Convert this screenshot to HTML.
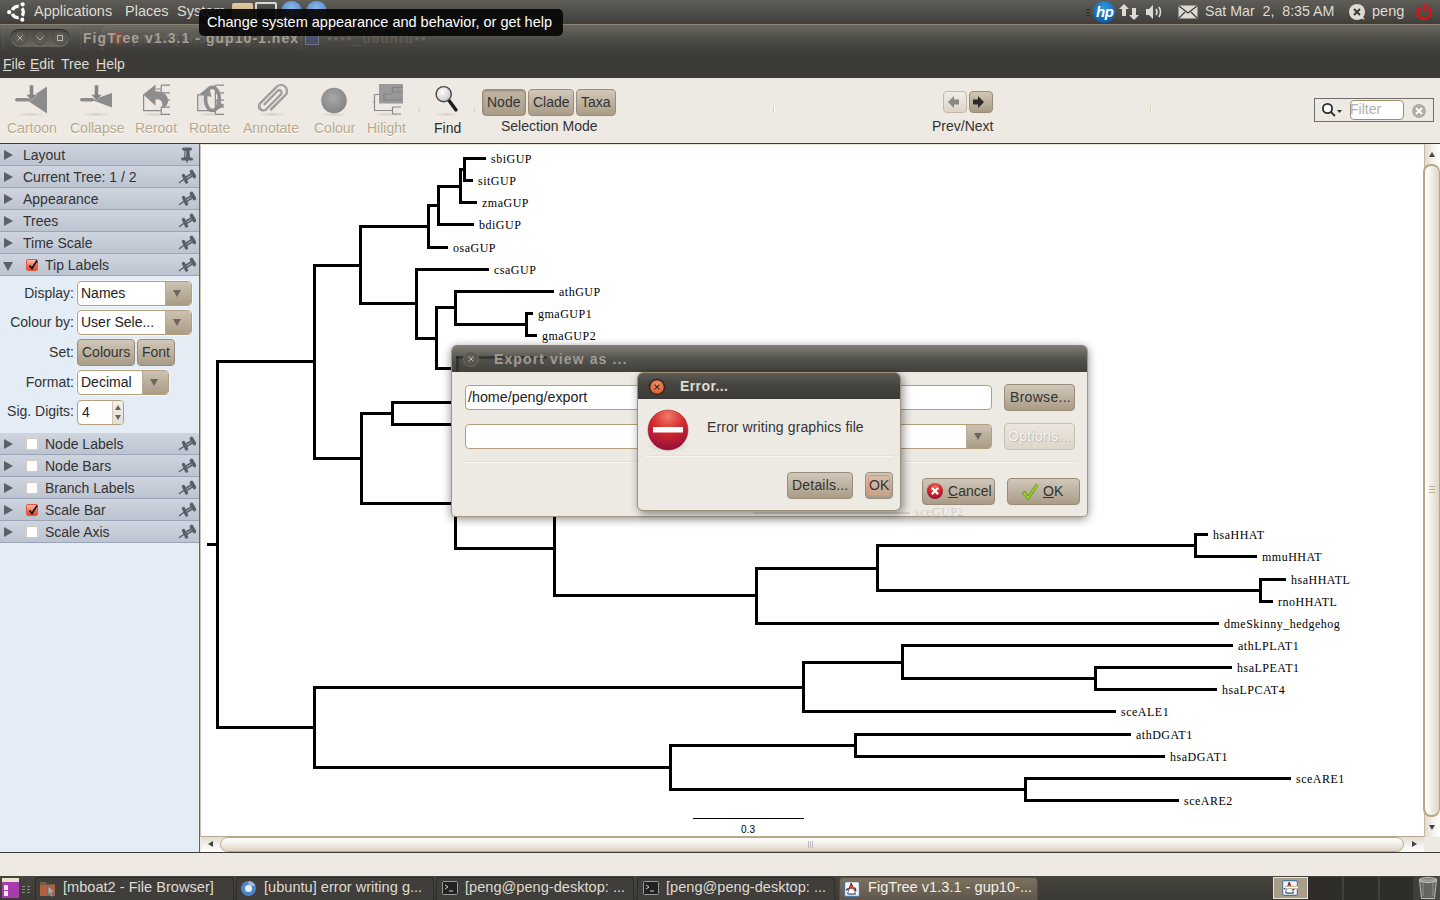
<!DOCTYPE html>
<html><head><meta charset="utf-8">
<style>
*{box-sizing:border-box;}
html,body{margin:0;padding:0;}
body{width:1440px;height:900px;overflow:hidden;position:relative;background:#edeae4;font-family:"Liberation Sans",sans-serif;font-size:14px;color:#3c3c3c;}
.a{position:absolute;}
.t{position:absolute;white-space:nowrap;line-height:1;}
/* top panel */
#top{left:0;top:0;width:1440px;height:24px;background:linear-gradient(#5f5d57,#3f3e3a);}
#topline{left:0;top:24px;width:1440px;height:1px;background:#8c8374;}
#title{left:0;top:25px;width:1440px;height:28px;background:linear-gradient(#6b6861 0%,#4a4844 60%,#3c3b37 100%);}
#menu{left:0;top:53px;width:1440px;height:25px;background:#3c3b37;}
#toolbar{left:0;top:78px;width:1440px;height:65px;background:#eeeae3;}
#tbline{left:0;top:143px;width:1440px;height:1px;background:#3c3b37;}
#left{left:0;top:144px;width:199px;height:708px;background:#e4ecf6;}
#leftline{left:199px;top:144px;width:1px;height:709px;background:#64666b;}
#canvas{left:200px;top:144px;width:1224px;height:693px;background:#fff;border-left:1px solid #cfc3ae;border-top:1px solid #efe6d8;border-bottom:1px solid #b9a98f;}
#botline{left:0;top:852px;width:1440px;height:1px;background:#3c3b37;}
#status{left:0;top:853px;width:1440px;height:23px;background:#eeeae3;}
#bottom{left:0;top:876px;width:1440px;height:24px;background:#3c3b37;}
.tree{position:absolute;left:0;top:0;}
.hdr{position:absolute;left:0;width:199px;height:22px;background:linear-gradient(#cfd5df,#bcc4d1);border-bottom:1px solid #9ba5b5;}
.hdr .tri{position:absolute;left:4px;top:6px;width:0;height:0;border-left:9px solid #5d6068;border-top:5px solid transparent;border-bottom:5px solid transparent;}
.hdr .tri.dn{left:3px;top:8px;border-left:5px solid transparent;border-right:5px solid transparent;border-top:9px solid #5d6068;border-bottom:0;}
.hdr .lbl{position:absolute;top:4px;font-size:14px;color:#333;white-space:nowrap;line-height:14px;}
.hdr .cb{position:absolute;left:26px;top:5px;width:12px;height:12px;border-radius:2px;background:#fff;border:1px solid #d6cdbd;}
.hdr .cb.on{background:linear-gradient(#fbc3b3,#f1735b 55%,#e9482b);border-color:#e0573c;}
.pin{position:absolute;left:176px;top:2px;}
.btn{position:absolute;border:1px solid #9a8d78;border-radius:4px;background:linear-gradient(#d2c8b9,#a99c87);}
.tbt{position:absolute;font-size:14px;color:#b7a78d;text-shadow:0 1px 0 #fff;white-space:nowrap;line-height:14px;}
</style></head>
<body>
<!-- top panel -->
<div id="top" class="a"></div>
<div id="topline" class="a"></div>
<div id="title" class="a"></div>
<div id="menu" class="a"></div>
<div id="toolbar" class="a"></div>
<div id="tbline" class="a"></div>
<div id="left" class="a"></div>
<div id="leftline" class="a"></div>
<div id="canvas" class="a"></div>
<div id="botline" class="a"></div>
<div id="status" class="a"></div>
<div id="bottom" class="a"></div>

<svg class="tree" width="1440" height="900" viewBox="0 0 1440 900">
<g stroke="#000" stroke-width="3" shape-rendering="crispEdges" stroke-linecap="butt"><line x1="217.5" y1="360.0" x2="217.5" y2="729.0"/><line x1="216.0" y1="361.5" x2="316.0" y2="361.5"/><line x1="314.5" y1="264.0" x2="314.5" y2="460.0"/><line x1="313.0" y1="265.5" x2="362.0" y2="265.5"/><line x1="360.5" y1="225.0" x2="360.5" y2="305.0"/><line x1="359.0" y1="226.5" x2="430.0" y2="226.5"/><line x1="428.5" y1="204.0" x2="428.5" y2="249.0"/><line x1="427.0" y1="205.5" x2="440.0" y2="205.5"/><line x1="438.5" y1="185.0" x2="438.5" y2="226.0"/><line x1="437.0" y1="186.5" x2="462.0" y2="186.5"/><line x1="460.5" y1="168.0" x2="460.5" y2="204.0"/><line x1="459.0" y1="169.5" x2="466.0" y2="169.5"/><line x1="464.5" y1="157.0" x2="464.5" y2="182.0"/><line x1="463.0" y1="158.5" x2="486" y2="158.5"/><line x1="463.0" y1="180.5" x2="473" y2="180.5"/><line x1="459.0" y1="202.5" x2="477" y2="202.5"/><line x1="437.0" y1="224.5" x2="474" y2="224.5"/><line x1="427.0" y1="247.5" x2="448" y2="247.5"/><line x1="359.0" y1="303.5" x2="418.0" y2="303.5"/><line x1="416.5" y1="268.0" x2="416.5" y2="340.0"/><line x1="415.0" y1="269.5" x2="489" y2="269.5"/><line x1="415.0" y1="338.5" x2="438.0" y2="338.5"/><line x1="436.5" y1="306.0" x2="436.5" y2="370.0"/><line x1="435.0" y1="307.5" x2="457.0" y2="307.5"/><line x1="455.5" y1="290.0" x2="455.5" y2="326.0"/><line x1="454.0" y1="291.5" x2="554" y2="291.5"/><line x1="454.0" y1="324.5" x2="528.0" y2="324.5"/><line x1="526.5" y1="312.0" x2="526.5" y2="337.0"/><line x1="525.0" y1="313.5" x2="533" y2="313.5"/><line x1="525.0" y1="335.5" x2="537" y2="335.5"/><line x1="435.0" y1="368.5" x2="459.0" y2="368.5"/><line x1="457.5" y1="356.0" x2="457.5" y2="382.0"/><line x1="456.0" y1="357.5" x2="520" y2="357.5"/><line x1="456.0" y1="380.5" x2="520" y2="380.5"/><line x1="313.0" y1="458.5" x2="363.0" y2="458.5"/><line x1="361.5" y1="412.0" x2="361.5" y2="505.0"/><line x1="360.0" y1="413.5" x2="394.0" y2="413.5"/><line x1="392.5" y1="401.0" x2="392.5" y2="426.0"/><line x1="391.0" y1="402.5" x2="600" y2="402.5"/><line x1="391.0" y1="424.5" x2="600" y2="424.5"/><line x1="360.0" y1="503.5" x2="457.0" y2="503.5"/><line x1="455.5" y1="456.0" x2="455.5" y2="550.0"/><line x1="454.0" y1="457.5" x2="472.0" y2="457.5"/><line x1="470.5" y1="445.0" x2="470.5" y2="470.0"/><line x1="469.0" y1="446.5" x2="600" y2="446.5"/><line x1="469.0" y1="468.5" x2="600" y2="468.5"/><line x1="454.0" y1="548.5" x2="556.0" y2="548.5"/><line x1="554.5" y1="500.0" x2="554.5" y2="597.0"/><line x1="553.0" y1="501.5" x2="602.0" y2="501.5"/><line x1="600.5" y1="489.0" x2="600.5" y2="514.0"/><line x1="599.0" y1="490.5" x2="880" y2="490.5"/><line x1="599.0" y1="512.5" x2="908" y2="512.5"/><line x1="553.0" y1="595.5" x2="758.0" y2="595.5"/><line x1="756.5" y1="567.0" x2="756.5" y2="625.0"/><line x1="755.0" y1="568.5" x2="879.0" y2="568.5"/><line x1="877.5" y1="544.0" x2="877.5" y2="592.0"/><line x1="876.0" y1="545.5" x2="1197.0" y2="545.5"/><line x1="1195.5" y1="533.0" x2="1195.5" y2="558.0"/><line x1="1194.0" y1="534.5" x2="1208" y2="534.5"/><line x1="1194.0" y1="556.5" x2="1257" y2="556.5"/><line x1="876.0" y1="590.5" x2="1262.0" y2="590.5"/><line x1="1260.5" y1="578.0" x2="1260.5" y2="603.0"/><line x1="1259.0" y1="579.5" x2="1286" y2="579.5"/><line x1="1259.0" y1="601.5" x2="1273" y2="601.5"/><line x1="755.0" y1="623.5" x2="1219" y2="623.5"/><line x1="216.0" y1="727.5" x2="316.0" y2="727.5"/><line x1="314.5" y1="686.0" x2="314.5" y2="769.0"/><line x1="313.0" y1="687.5" x2="805.0" y2="687.5"/><line x1="803.5" y1="661.0" x2="803.5" y2="713.0"/><line x1="802.0" y1="662.5" x2="904.0" y2="662.5"/><line x1="902.5" y1="644.0" x2="902.5" y2="680.0"/><line x1="901.0" y1="645.5" x2="1233" y2="645.5"/><line x1="901.0" y1="678.5" x2="1097.0" y2="678.5"/><line x1="1095.5" y1="666.0" x2="1095.5" y2="691.0"/><line x1="1094.0" y1="667.5" x2="1232" y2="667.5"/><line x1="1094.0" y1="689.5" x2="1217" y2="689.5"/><line x1="802.0" y1="711.5" x2="1116" y2="711.5"/><line x1="313.0" y1="767.5" x2="672.0" y2="767.5"/><line x1="670.5" y1="744.0" x2="670.5" y2="791.0"/><line x1="669.0" y1="745.5" x2="857.0" y2="745.5"/><line x1="855.5" y1="733.0" x2="855.5" y2="758.0"/><line x1="854.0" y1="734.5" x2="1131" y2="734.5"/><line x1="854.0" y1="756.5" x2="1165" y2="756.5"/><line x1="669.0" y1="789.5" x2="1027.0" y2="789.5"/><line x1="1025.5" y1="777.0" x2="1025.5" y2="802.0"/><line x1="1024.0" y1="778.5" x2="1291" y2="778.5"/><line x1="1024.0" y1="800.5" x2="1179" y2="800.5"/><line x1="207" y1="544.5" x2="217.5" y2="544.5"/></g>
<g font-family="Liberation Serif" font-size="12" fill="#000" letter-spacing="0.5"><text x="491.0" y="162.8">sbiGUP</text><text x="478.0" y="184.8">sitGUP</text><text x="482.0" y="206.8">zmaGUP</text><text x="479.0" y="228.8">bdiGUP</text><text x="453.0" y="251.8">osaGUP</text><text x="494.0" y="273.8">csaGUP</text><text x="559.0" y="295.8">athGUP</text><text x="538.0" y="317.8">gmaGUP1</text><text x="542.0" y="339.8">gmaGUP2</text><text x="1213.0" y="538.8">hsaHHAT</text><text x="1262.0" y="560.8">mmuHHAT</text><text x="1291.0" y="583.8">hsaHHATL</text><text x="1278.0" y="605.8">rnoHHATL</text><text x="1224.0" y="627.8">dmeSkinny_hedgehog</text><text x="1238.0" y="649.8">athLPLAT1</text><text x="1237.0" y="671.8">hsaLPEAT1</text><text x="1222.0" y="693.8">hsaLPCAT4</text><text x="1121.0" y="715.8">sceALE1</text><text x="1136.0" y="738.8">athDGAT1</text><text x="1170.0" y="760.8">hsaDGAT1</text><text x="1296.0" y="782.8">sceARE1</text><text x="1184.0" y="804.8">sceARE2</text></g>
<line x1="693" y1="818.5" x2="804" y2="818.5" stroke="#000" stroke-width="1"/>
<text x="748" y="833" font-family="Liberation Sans" font-size="10" text-anchor="middle" fill="#000">0.3</text>
</svg>

<!-- TOP PANEL CONTENT -->
<svg class="a" style="left:5px;top:1px" width="24" height="22" viewBox="0 0 24 22"><path d="M7.44 9.08 A5.6 5.6 0 0 1 13.67 5.49 M16.99 7.40 A5.6 5.6 0 0 1 16.99 14.60 M13.67 16.51 A5.6 5.6 0 0 1 7.44 12.92" fill="none" stroke="#fff" stroke-width="3.4"/><g fill="#fff"><circle cx="4.2" cy="11.2" r="2.1"/><circle cx="17.6" cy="3.3" r="2.1"/><circle cx="17.3" cy="18.7" r="2.1"/></g></svg>
<div class="t" style="left:34px;top:4px;font-size:14.5px;color:#dfdbd2;">Applications</div>
<div class="t" style="left:125px;top:4px;font-size:14.5px;color:#dfdbd2;">Places</div>
<div class="t" style="left:177px;top:4px;font-size:14.5px;color:#dfdbd2;">System</div>
<div class="a" style="left:232px;top:3px;width:21px;height:18px;background:linear-gradient(#e2cba3,#b89a6a);border-radius:2px;"></div>
<div class="a" style="left:255px;top:2px;width:22px;height:19px;background:linear-gradient(#555,#222);border:2px solid #d8d8d8;border-radius:2px;"></div>
<div class="a" style="left:281px;top:1px;width:21px;height:21px;border-radius:50%;background:radial-gradient(circle at 50% 35%,#8fb8ea,#3f74c2);"></div>
<div class="a" style="left:306px;top:1px;width:21px;height:21px;border-radius:50%;background:radial-gradient(circle at 50% 35%,#8fb8ea,#3f74c2);"></div>
<!-- right side -->
<div class="a" style="left:1086px;top:9px;width:4px;height:7px;border-top:1px solid #2a2a28;border-bottom:1px solid #2a2a28;"></div><div class="a" style="left:1086px;top:12px;width:4px;height:1px;background:#2a2a28;"></div>
<div class="a" style="left:1093px;top:1px;width:22px;height:22px;border-radius:50%;background:radial-gradient(circle at 50% 30%,#2f95dc,#0a4f98);"></div>
<div class="t" style="left:1096px;top:4px;font-size:15px;font-style:italic;font-weight:bold;color:#fff;letter-spacing:-0.5px;">hp</div>
<svg class="a" style="left:1119px;top:3px" width="20" height="18" viewBox="0 0 20 18"><g fill="#dfdbd2"><path d="M5 1 L10 6 H7 V13 H3 V6 H0 Z"/><path d="M15 17 L20 12 H17 V5 H13 V12 H10 Z"/></g></svg>
<svg class="a" style="left:1145px;top:4px" width="18" height="16" viewBox="0 0 18 16"><g fill="#dfdbd2"><path d="M1 5 H4 L8 1 V15 L4 11 H1 Z"/></g><g fill="none" stroke="#dfdbd2" stroke-width="1.6"><path d="M11 5 Q13 8 11 11"/><path d="M14 3 Q17 8 14 13"/></g></svg>
<svg class="a" style="left:1178px;top:5px" width="20" height="14" viewBox="0 0 20 14"><rect x="0.5" y="0.5" width="19" height="13" rx="1" fill="#dfdbd2"/><path d="M1 1 L10 8 L19 1 M1 13 L7 7 M19 13 L13 7" stroke="#3c3b37" stroke-width="1.2" fill="none"/></svg>
<div class="t" style="left:1205px;top:4px;font-size:14.2px;color:#dfdbd2;letter-spacing:0px;">Sat Mar &nbsp;2, &nbsp;8:35 AM</div>
<svg class="a" style="left:1348px;top:3px" width="20" height="19" viewBox="0 0 20 19"><circle cx="9" cy="9" r="8" fill="#dfdbd2"/><path d="M12 15 L17 17 L14 12 Z" fill="#dfdbd2"/><path d="M6 6 L12 12 M12 6 L6 12" stroke="#3c3b37" stroke-width="2"/></svg>
<div class="t" style="left:1372px;top:4px;font-size:14.5px;color:#dfdbd2;">peng</div>
<svg class="a" style="left:1415px;top:3px" width="18" height="18" viewBox="0 0 18 18"><path d="M5.2 4.2 A6.5 6.5 0 1 0 12.8 4.2" fill="none" stroke="#d11" stroke-width="2.4"/><path d="M9 1 V9" stroke="#d11" stroke-width="2.4"/></svg>

<!-- TITLE BAR -->
<!-- ghost overlay -->
<div class="a" style="left:3px;top:27px;width:78px;height:23px;border:1px solid rgba(255,255,255,.06);border-bottom:0;border-radius:3px 3px 0 0;"></div>
<div class="a" style="left:102px;top:26px;width:200px;height:25px;border:1px solid rgba(255,255,255,.07);border-bottom:0;border-radius:5px 5px 0 0;background:linear-gradient(rgba(255,255,255,.04),rgba(255,255,255,0));"></div>
<div class="a" style="left:111px;top:31px;width:14px;height:14px;border-radius:50%;background:rgba(200,70,40,.28);"></div>
<div class="t" style="left:132px;top:32px;font-size:13px;color:rgba(160,155,145,.25);">[ubuntu] error writing</div>
<div class="a" style="left:305px;top:31px;width:14px;height:14px;background:rgba(70,90,150,.45);border:1px solid rgba(200,200,220,.3);"></div>
<div class="t" style="left:327px;top:32px;font-size:13px;color:rgba(150,145,135,.35);letter-spacing:2px;">▪▪▪▪_ubuntu▪▪</div>

<div class="a" style="left:10px;top:29px;width:60px;height:18px;border-radius:9px;background:linear-gradient(#4a4843,#6a675f);box-shadow:inset 0 1px 1px rgba(0,0,0,.5);"></div>
<div class="a" style="left:13px;top:31px;width:14px;height:14px;border-radius:50%;background:#5d5a54;border:1px solid #4c4a45;"></div>
<div class="a" style="left:33px;top:31px;width:14px;height:14px;border-radius:50%;background:#5d5a54;border:1px solid #4c4a45;"></div>
<div class="a" style="left:53px;top:31px;width:14px;height:14px;border-radius:50%;background:#5d5a54;border:1px solid #4c4a45;"></div>
<svg class="a" style="left:13px;top:31px" width="56" height="14" viewBox="0 0 56 14"><g stroke="#b5b1a8" stroke-width="1" fill="none"><path d="M4.5 4.5 L9.5 9.5 M9.5 4.5 L4.5 9.5"/><path d="M23.5 5.5 L27 9 L30.5 5.5"/><rect x="44.5" y="4.5" width="5" height="5"/></g></svg>
<div class="t" style="left:83px;top:31px;font-size:14px;font-weight:bold;color:#a39f95;letter-spacing:1.05px;">FigTree v1.3.1 - gup10-1.nex</div>

<!-- MENU -->
<div class="t" style="left:3px;top:57px;font-size:14px;color:#dfdbd2;"><u>F</u>ile</div>
<div class="t" style="left:30px;top:57px;font-size:14px;color:#dfdbd2;"><u>E</u>dit</div>
<div class="t" style="left:61px;top:57px;font-size:14px;color:#dfdbd2;">Tree</div>
<div class="t" style="left:96px;top:57px;font-size:14px;color:#dfdbd2;"><u>H</u>elp</div>




<!-- SCROLLBARS -->
<div class="a" style="left:1424px;top:144px;width:16px;height:709px;background:#edeae4;"></div>
<div class="a" style="left:1424px;top:144px;width:16px;height:693px;background:linear-gradient(90deg,#e2dccf,#f6f4f0 60%,#fff);border-left:1px solid #c7b99f;"></div>
<div class="a" style="left:1423px;top:164px;width:17px;height:653px;border:2px solid #b9a683;border-right-width:1px;border-radius:8px;background:linear-gradient(90deg,#fff,#f4f1eb 40%,#ddd4c4);"></div>
<div class="a" style="left:1429px;top:486px;width:6px;height:7px;border-top:1px solid #bfae90;border-bottom:1px solid #bfae90;"></div><div class="a" style="left:1429px;top:489px;width:6px;height:1px;background:#bfae90;"></div>
<div class="a" style="left:1429px;top:152px;width:0;height:0;border-left:3.5px solid transparent;border-right:3.5px solid transparent;border-bottom:5px solid #444;"></div>
<div class="a" style="left:1429px;top:825px;width:0;height:0;border-left:3.5px solid transparent;border-right:3.5px solid transparent;border-top:5px solid #444;"></div>
<div class="a" style="left:201px;top:837px;width:1223px;height:15px;background:linear-gradient(#e2dccf,#f6f4f0 60%,#fff);"></div>
<div class="a" style="left:220px;top:837px;width:1184px;height:15px;border:1px solid #b9a683;border-radius:8px;background:linear-gradient(#fff,#f4f1eb 40%,#ddd4c4);"></div>
<div class="a" style="left:208px;top:841px;width:0;height:0;border-top:3.5px solid transparent;border-bottom:3.5px solid transparent;border-right:5px solid #444;"></div>
<div class="a" style="left:1412px;top:841px;width:0;height:0;border-top:3.5px solid transparent;border-bottom:3.5px solid transparent;border-left:5px solid #444;"></div>
<div class="a" style="left:808px;top:841px;width:5px;height:7px;border-left:1px solid #bbb;border-right:1px solid #bbb;"></div>
<div class="a" style="left:810px;top:841px;width:1px;height:7px;background:#bbb;"></div>

<div class="a" style="left:0;top:852px;width:1440px;height:1px;background:#3c3b37;"></div>
<!-- BOTTOM PANEL -->
<div class="a" style="left:0;top:876px;width:1440px;height:24px;background:linear-gradient(#45443f,#3a3935);"></div>
<svg class="a" style="left:1px;top:877px" width="32" height="22" viewBox="0 0 32 22"><rect x="1" y="1" width="17" height="20" fill="#a93ab0"/><rect x="1" y="1" width="17" height="4" fill="#e9e4c9"/><rect x="3" y="8" width="4" height="5" fill="#f0e6f0"/><rect x="3" y="14" width="4" height="5" fill="#f0e6f0"/><g fill="#8a8a85"><rect x="21" y="9" width="3" height="1"/><rect x="26" y="9" width="3" height="1"/><rect x="21" y="12" width="3" height="1"/><rect x="26" y="12" width="3" height="1"/><rect x="21" y="15" width="3" height="1"/><rect x="26" y="15" width="3" height="1"/></g></svg>
<div class="a" style="left:35px;top:877px;width:199px;height:23px;border:1px solid #2e2d2a;border-bottom:0;border-radius:3px 3px 0 0;background:#3f3e3a;"></div>
<div class="a" style="left:236px;top:877px;width:198px;height:23px;border:1px solid #2e2d2a;border-bottom:0;border-radius:3px 3px 0 0;background:#3f3e3a;"></div>
<div class="a" style="left:436px;top:877px;width:198px;height:23px;border:1px solid #2e2d2a;border-bottom:0;border-radius:3px 3px 0 0;background:#3f3e3a;"></div>
<div class="a" style="left:637px;top:877px;width:198px;height:23px;border:1px solid #2e2d2a;border-bottom:0;border-radius:3px 3px 0 0;background:#3f3e3a;"></div>
<div class="a" style="left:839px;top:877px;width:199px;height:23px;border:1px solid #4f4b44;border-bottom:0;border-radius:4px 4px 0 0;background:linear-gradient(#7e715f,#5e564b);"></div>
<svg class="a" style="left:39px;top:880px" width="18" height="17" viewBox="0 0 18 17"><path d="M1 2 H7 L8 4 H16 V16 H1 Z" fill="#7b5b45"/><rect x="1" y="5" width="15" height="11" fill="#b2603e"/><path d="M9 6 L16 12 L12.5 12.5 L14 16 L12 16.5 L10.5 13 L9 15 Z" fill="#a8a8a8" stroke="#555" stroke-width=".5"/></svg>
<div class="t" style="left:63px;top:880px;font-size:14.6px;color:#dfdbd2;">[mboat2 - File Browser]</div>
<svg class="a" style="left:240px;top:880px" width="17" height="17" viewBox="0 0 17 17"><circle cx="8.5" cy="8.5" r="7.5" fill="#4f86c8"/><circle cx="8.5" cy="8.5" r="3.5" fill="#e8eef7"/><path d="M8.5 1 A7.5 7.5 0 0 1 15.5 6 H8.5 Z" fill="#d9d9d9" opacity=".6"/></svg>
<div class="t" style="left:264px;top:880px;font-size:14.6px;color:#dfdbd2;">[ubuntu] error writing g...</div>
<svg class="a" style="left:442px;top:880px" width="16" height="16" viewBox="0 0 16 16"><rect x="0.5" y="1.5" width="15" height="13" rx="1" fill="#222" stroke="#999"/><path d="M3 5 L6 7 L3 9 M7 11 H11" stroke="#ccc" stroke-width="1" fill="none"/></svg>
<div class="t" style="left:465px;top:880px;font-size:14.6px;color:#dfdbd2;">[peng@peng-desktop: ...</div>
<svg class="a" style="left:643px;top:880px" width="16" height="16" viewBox="0 0 16 16"><rect x="0.5" y="1.5" width="15" height="13" rx="1" fill="#222" stroke="#999"/><path d="M3 5 L6 7 L3 9 M7 11 H11" stroke="#ccc" stroke-width="1" fill="none"/></svg>
<div class="t" style="left:666px;top:880px;font-size:14.6px;color:#dfdbd2;">[peng@peng-desktop: ...</div>
<svg class="a" style="left:844px;top:881px" width="16" height="16" viewBox="0 0 16 16"><rect x="0.6" y="0.6" width="14.8" height="14.8" rx="1.5" fill="#f4f4f4" stroke="#4f78a0" stroke-width="1.2"/><path d="M7.2 2 L11.5 12.5 Q7.5 14.5 3.5 12.5 Z" fill="#fff" stroke="#333" stroke-width=".7"/><path d="M7.2 2 L9.6 7.5 H5 Z" fill="#1d1d1d"/><circle cx="7.5" cy="6" r="1.9" fill="#e8302c"/><path d="M5 7.5 L2 9" stroke="#3a4a5a" stroke-width="1.6"/><path d="M10.5 6.5 L12 10" stroke="#222" stroke-width="1.4"/><path d="M3.5 13 H12" stroke="#3f6a90" stroke-width="1"/></svg>
<div class="t" style="left:868px;top:880px;font-size:14.6px;color:#f2efe8;">FigTree v1.3.1 - gup10-...</div>
<div class="a" style="left:1273px;top:877px;width:35px;height:22px;border:1px solid #e8e4dc;background:#a99c88;"></div>
<svg class="a" style="left:1282px;top:880px" width="16" height="16" viewBox="0 0 16 16"><rect x="0.6" y="0.6" width="14.8" height="14.8" rx="1.5" fill="#f4f4f4" stroke="#4f78a0" stroke-width="1.2"/><path d="M7.2 2 L11.5 12.5 Q7.5 14.5 3.5 12.5 Z" fill="#fff" stroke="#333" stroke-width=".7"/><path d="M7.2 2 L9.6 7.5 H5 Z" fill="#1d1d1d"/><circle cx="7.5" cy="6" r="1.9" fill="#e8302c"/><path d="M5 7.5 L2 9" stroke="#3a4a5a" stroke-width="1.6"/><path d="M10.5 6.5 L12 10" stroke="#222" stroke-width="1.4"/><path d="M3.5 13 H12" stroke="#3f6a90" stroke-width="1"/></svg><div class="a" style="left:1285px;top:886px;width:13px;height:3px;background:#fff;border-top:1px solid #c8b9a0;border-bottom:1px solid #c8b9a0;"></div>
<div class="a" style="left:1308px;top:877px;width:35px;height:23px;background:#2e2d2a;border-right:1px solid #46443f;"></div>
<div class="a" style="left:1344px;top:877px;width:35px;height:23px;background:#2e2d2a;border-right:1px solid #46443f;"></div>
<div class="a" style="left:1380px;top:877px;width:35px;height:23px;background:#2e2d2a;"></div>
<div class="a" style="left:1413px;top:877px;width:27px;height:23px;background:linear-gradient(90deg,#3e3d39,#4d4b46);"></div><svg class="a" style="left:1417px;top:876px" width="22" height="24" viewBox="0 0 22 24"><path d="M2.5 4 H19.5 L17.5 22.5 H4.5 Z" fill="rgba(160,160,160,.35)" stroke="#b9b9b9" stroke-width="1"/><ellipse cx="11" cy="4" rx="8.8" ry="2.4" fill="rgba(200,200,200,.3)" stroke="#d0d0d0" stroke-width="1"/><path d="M6 6 V20 M16 6 V20" stroke="rgba(230,230,230,.35)" stroke-width="1"/></svg>

<!-- LEFT PANEL -->
<div class="hdr" style="top:144px"><div class="tri"></div><div class="lbl" style="left:23px">Layout</div><svg class="pin" style="left:181px;top:3px" width="14" height="16" viewBox="0 0 14 16"><path d="M2.5 2 H9.5" stroke="#5a5e66" stroke-width="3" stroke-linecap="round"/><path d="M3.5 2.5 H8.5 L9 11 H3 Z" fill="#5a5e66"/><path d="M1.5 12 H10.5" stroke="#5a5e66" stroke-width="3" stroke-linecap="round"/><path d="M6 13 V15.5" stroke="#5a5e66" stroke-width="1.5"/><path d="M5 4 L4.6 10" stroke="#b9c0cb" stroke-width="0.9"/></svg></div>
<div class="hdr" style="top:166px"><div class="tri"></div><div class="lbl" style="left:23px">Current Tree: 1 / 2</div><svg class="pin" width="20" height="16" viewBox="0 0 20 16"><path d="M3.5 14.5 L8.5 11" stroke="#5a5e66" stroke-width="1.5" stroke-linecap="round"/><path d="M7.5 7.5 L10.5 14" stroke="#5a5e66" stroke-width="3.2" stroke-linecap="round"/><path d="M9 11 L16.5 6.5" stroke="#5a5e66" stroke-width="3.8"/><path d="M15.5 3.5 L18.5 8.5" stroke="#5a5e66" stroke-width="3.6" stroke-linecap="round"/><path d="M10.5 10.2 L15.5 7.2" stroke="#b9c0cb" stroke-width="0.9"/></svg></div>
<div class="hdr" style="top:188px"><div class="tri"></div><div class="lbl" style="left:23px">Appearance</div><svg class="pin" width="20" height="16" viewBox="0 0 20 16"><path d="M3.5 14.5 L8.5 11" stroke="#5a5e66" stroke-width="1.5" stroke-linecap="round"/><path d="M7.5 7.5 L10.5 14" stroke="#5a5e66" stroke-width="3.2" stroke-linecap="round"/><path d="M9 11 L16.5 6.5" stroke="#5a5e66" stroke-width="3.8"/><path d="M15.5 3.5 L18.5 8.5" stroke="#5a5e66" stroke-width="3.6" stroke-linecap="round"/><path d="M10.5 10.2 L15.5 7.2" stroke="#b9c0cb" stroke-width="0.9"/></svg></div>
<div class="hdr" style="top:210px"><div class="tri"></div><div class="lbl" style="left:23px">Trees</div><svg class="pin" width="20" height="16" viewBox="0 0 20 16"><path d="M3.5 14.5 L8.5 11" stroke="#5a5e66" stroke-width="1.5" stroke-linecap="round"/><path d="M7.5 7.5 L10.5 14" stroke="#5a5e66" stroke-width="3.2" stroke-linecap="round"/><path d="M9 11 L16.5 6.5" stroke="#5a5e66" stroke-width="3.8"/><path d="M15.5 3.5 L18.5 8.5" stroke="#5a5e66" stroke-width="3.6" stroke-linecap="round"/><path d="M10.5 10.2 L15.5 7.2" stroke="#b9c0cb" stroke-width="0.9"/></svg></div>
<div class="hdr" style="top:232px"><div class="tri"></div><div class="lbl" style="left:23px">Time Scale</div><svg class="pin" width="20" height="16" viewBox="0 0 20 16"><path d="M3.5 14.5 L8.5 11" stroke="#5a5e66" stroke-width="1.5" stroke-linecap="round"/><path d="M7.5 7.5 L10.5 14" stroke="#5a5e66" stroke-width="3.2" stroke-linecap="round"/><path d="M9 11 L16.5 6.5" stroke="#5a5e66" stroke-width="3.8"/><path d="M15.5 3.5 L18.5 8.5" stroke="#5a5e66" stroke-width="3.6" stroke-linecap="round"/><path d="M10.5 10.2 L15.5 7.2" stroke="#b9c0cb" stroke-width="0.9"/></svg></div>
<div class="hdr" style="top:254px"><div class="tri dn"></div><div class="cb on"></div><svg style="position:absolute;left:27px;top:5px" width="12" height="12" viewBox="0 0 12 12"><path d="M2.5 6.5 L5 9.5 L10 1.5" stroke="#111" stroke-width="1.7" fill="none"/></svg><div class="lbl" style="left:45px">Tip Labels</div><svg class="pin" width="20" height="16" viewBox="0 0 20 16"><path d="M3.5 14.5 L8.5 11" stroke="#5a5e66" stroke-width="1.5" stroke-linecap="round"/><path d="M7.5 7.5 L10.5 14" stroke="#5a5e66" stroke-width="3.2" stroke-linecap="round"/><path d="M9 11 L16.5 6.5" stroke="#5a5e66" stroke-width="3.8"/><path d="M15.5 3.5 L18.5 8.5" stroke="#5a5e66" stroke-width="3.6" stroke-linecap="round"/><path d="M10.5 10.2 L15.5 7.2" stroke="#b9c0cb" stroke-width="0.9"/></svg></div>
<div class="hdr" style="top:433px"><div class="tri"></div><div class="cb"></div><div class="lbl" style="left:45px">Node Labels</div><svg class="pin" width="20" height="16" viewBox="0 0 20 16"><path d="M3.5 14.5 L8.5 11" stroke="#5a5e66" stroke-width="1.5" stroke-linecap="round"/><path d="M7.5 7.5 L10.5 14" stroke="#5a5e66" stroke-width="3.2" stroke-linecap="round"/><path d="M9 11 L16.5 6.5" stroke="#5a5e66" stroke-width="3.8"/><path d="M15.5 3.5 L18.5 8.5" stroke="#5a5e66" stroke-width="3.6" stroke-linecap="round"/><path d="M10.5 10.2 L15.5 7.2" stroke="#b9c0cb" stroke-width="0.9"/></svg></div>
<div class="hdr" style="top:455px"><div class="tri"></div><div class="cb"></div><div class="lbl" style="left:45px">Node Bars</div><svg class="pin" width="20" height="16" viewBox="0 0 20 16"><path d="M3.5 14.5 L8.5 11" stroke="#5a5e66" stroke-width="1.5" stroke-linecap="round"/><path d="M7.5 7.5 L10.5 14" stroke="#5a5e66" stroke-width="3.2" stroke-linecap="round"/><path d="M9 11 L16.5 6.5" stroke="#5a5e66" stroke-width="3.8"/><path d="M15.5 3.5 L18.5 8.5" stroke="#5a5e66" stroke-width="3.6" stroke-linecap="round"/><path d="M10.5 10.2 L15.5 7.2" stroke="#b9c0cb" stroke-width="0.9"/></svg></div>
<div class="hdr" style="top:477px"><div class="tri"></div><div class="cb"></div><div class="lbl" style="left:45px">Branch Labels</div><svg class="pin" width="20" height="16" viewBox="0 0 20 16"><path d="M3.5 14.5 L8.5 11" stroke="#5a5e66" stroke-width="1.5" stroke-linecap="round"/><path d="M7.5 7.5 L10.5 14" stroke="#5a5e66" stroke-width="3.2" stroke-linecap="round"/><path d="M9 11 L16.5 6.5" stroke="#5a5e66" stroke-width="3.8"/><path d="M15.5 3.5 L18.5 8.5" stroke="#5a5e66" stroke-width="3.6" stroke-linecap="round"/><path d="M10.5 10.2 L15.5 7.2" stroke="#b9c0cb" stroke-width="0.9"/></svg></div>
<div class="hdr" style="top:499px"><div class="tri"></div><div class="cb on"></div><svg style="position:absolute;left:27px;top:5px" width="12" height="12" viewBox="0 0 12 12"><path d="M2.5 6.5 L5 9.5 L10 1.5" stroke="#111" stroke-width="1.7" fill="none"/></svg><div class="lbl" style="left:45px">Scale Bar</div><svg class="pin" width="20" height="16" viewBox="0 0 20 16"><path d="M3.5 14.5 L8.5 11" stroke="#5a5e66" stroke-width="1.5" stroke-linecap="round"/><path d="M7.5 7.5 L10.5 14" stroke="#5a5e66" stroke-width="3.2" stroke-linecap="round"/><path d="M9 11 L16.5 6.5" stroke="#5a5e66" stroke-width="3.8"/><path d="M15.5 3.5 L18.5 8.5" stroke="#5a5e66" stroke-width="3.6" stroke-linecap="round"/><path d="M10.5 10.2 L15.5 7.2" stroke="#b9c0cb" stroke-width="0.9"/></svg></div>
<div class="hdr" style="top:521px"><div class="tri"></div><div class="cb"></div><div class="lbl" style="left:45px">Scale Axis</div><svg class="pin" width="20" height="16" viewBox="0 0 20 16"><path d="M3.5 14.5 L8.5 11" stroke="#5a5e66" stroke-width="1.5" stroke-linecap="round"/><path d="M7.5 7.5 L10.5 14" stroke="#5a5e66" stroke-width="3.2" stroke-linecap="round"/><path d="M9 11 L16.5 6.5" stroke="#5a5e66" stroke-width="3.8"/><path d="M15.5 3.5 L18.5 8.5" stroke="#5a5e66" stroke-width="3.6" stroke-linecap="round"/><path d="M10.5 10.2 L15.5 7.2" stroke="#b9c0cb" stroke-width="0.9"/></svg></div>
<div class="t" style="right:1366px;top:286px;font-size:14px;color:#333;">Display:</div>
<div class="a" style="left:77px;top:281px;width:115px;height:25px;border:1px solid #b39f7c;border-radius:4px;background:#fff;box-shadow:0 0 0 1px rgba(255,255,255,.5);overflow:hidden;"><div class="t" style="left:3px;top:4px;font-size:14px;color:#222;">Names</div><div class="a" style="left:87px;top:0px;width:26px;height:23px;border-left:1px solid #b8ab96;border-radius:0 3px 3px 0;background:linear-gradient(#cdc2b1,#a99c87);"><div class="a" style="left:7px;top:8px;width:0;height:0;border-left:4.5px solid transparent;border-right:4.5px solid transparent;border-top:7px solid #6d675e;"></div></div></div>
<div class="t" style="right:1366px;top:315px;font-size:14px;color:#333;">Colour by:</div>
<div class="a" style="left:77px;top:310px;width:115px;height:25px;border:1px solid #b39f7c;border-radius:4px;background:#fff;box-shadow:0 0 0 1px rgba(255,255,255,.5);overflow:hidden;"><div class="t" style="left:3px;top:4px;font-size:14px;color:#222;">User Sele...</div><div class="a" style="left:87px;top:0px;width:26px;height:23px;border-left:1px solid #b8ab96;border-radius:0 3px 3px 0;background:linear-gradient(#cdc2b1,#a99c87);"><div class="a" style="left:7px;top:8px;width:0;height:0;border-left:4.5px solid transparent;border-right:4.5px solid transparent;border-top:7px solid #6d675e;"></div></div></div>
<div class="t" style="right:1366px;top:345px;font-size:14px;color:#333;">Set:</div>
<div class="btn" style="left:77px;top:339px;width:58px;height:27px;"></div><div class="t" style="left:82px;top:345px;font-size:14px;color:#333;">Colours</div>
<div class="btn" style="left:137px;top:339px;width:38px;height:27px;"></div><div class="t" style="left:142px;top:345px;font-size:14px;color:#333;">Font</div>
<div class="t" style="right:1366px;top:375px;font-size:14px;color:#333;">Format:</div>
<div class="a" style="left:77px;top:370px;width:92px;height:25px;border:1px solid #b39f7c;border-radius:4px;background:#fff;box-shadow:0 0 0 1px rgba(255,255,255,.5);overflow:hidden;"><div class="t" style="left:3px;top:4px;font-size:14px;color:#222;">Decimal</div><div class="a" style="left:64px;top:0px;width:26px;height:23px;border-left:1px solid #b8ab96;border-radius:0 3px 3px 0;background:linear-gradient(#cdc2b1,#a99c87);"><div class="a" style="left:7px;top:8px;width:0;height:0;border-left:4.5px solid transparent;border-right:4.5px solid transparent;border-top:7px solid #6d675e;"></div></div></div>
<div class="t" style="right:1366px;top:404px;font-size:14px;color:#333;">Sig. Digits:</div>
<div class="a" style="left:77px;top:400px;width:47px;height:25px;border:1px solid #b39f7c;border-radius:4px;background:#fff;overflow:hidden;"><div class="t" style="left:4px;top:4px;font-size:14px;color:#222;">4</div><div class="a" style="left:34px;top:0;width:11px;height:23px;border-left:1px solid #cfc6b6;background:linear-gradient(#f4f1ec,#e3ddd2);"></div><div class="a" style="left:37px;top:4px;width:0;height:0;border-left:3px solid transparent;border-right:3px solid transparent;border-bottom:5px solid #666;"></div><div class="a" style="left:37px;top:14px;width:0;height:0;border-left:3px solid transparent;border-right:3px solid transparent;border-top:5px solid #666;"></div></div>

<!-- TOOLBAR -->
<svg class="a" style="left:0;top:78px" width="480" height="45" viewBox="0 78 480 45">
<defs>
<radialGradient id="shd" cx="50%" cy="50%" r="50%"><stop offset="0" stop-color="#000" stop-opacity=".12"/><stop offset="1" stop-color="#000" stop-opacity="0"/></radialGradient>
<linearGradient id="gg" x1="0" y1="0" x2="0" y2="1"><stop offset="0" stop-color="#959595"/><stop offset="1" stop-color="#858585"/></linearGradient>
<radialGradient id="ball" cx="45%" cy="40%" r="60%"><stop offset="0" stop-color="#a8a8a8"/><stop offset="1" stop-color="#858585"/></radialGradient>
<radialGradient id="lens" cx="40%" cy="35%" r="65%"><stop offset="0" stop-color="#fff"/><stop offset="1" stop-color="#c8c8c8"/></radialGradient>
</defs>
<!-- shadows -->
<ellipse cx="31" cy="114.5" rx="15" ry="2" fill="url(#shd)"/>
<ellipse cx="96" cy="114.5" rx="15" ry="2" fill="url(#shd)"/>
<ellipse cx="156" cy="114.5" rx="15" ry="2" fill="url(#shd)"/>
<ellipse cx="210" cy="114.5" rx="15" ry="2" fill="url(#shd)"/>
<ellipse cx="272" cy="114.5" rx="15" ry="2" fill="url(#shd)"/>
<ellipse cx="334" cy="114.5" rx="15" ry="2" fill="url(#shd)"/>
<ellipse cx="388" cy="114.5" rx="15" ry="2" fill="url(#shd)"/>
<ellipse cx="447" cy="114.5" rx="13" ry="2" fill="url(#shd)"/>
<!-- Cartoon -->
<g fill="#8c8c8c">
<path d="M47 86.5 V113.5 L26.5 100 Z"/>
<rect x="15" y="98" width="14" height="3.6" rx="1.8"/>
<path d="M29.5 85 H33.5 V94.5 H37 L31.5 100.5 L26 94.5 H29.5 Z" fill="#858585" stroke="#eee" stroke-width=".4"/>
</g>
<!-- Collapse -->
<g fill="#8c8c8c">
<path d="M112 93 V107.5 L92 100 Z"/>
<rect x="80" y="98" width="14" height="3.6" rx="1.8"/>
<path d="M94.5 85 H98.5 V94.5 H102 L96.5 100.5 L91 94.5 H94.5 Z" fill="#858585" stroke="#eee" stroke-width=".4"/>
</g>
<!-- Reroot -->
<g stroke="#8a8a8a" stroke-width="1.2" fill="none">
<path d="M161.2 85.2 V93 M161.2 85.2 H170 M161.2 92.8 H170 M166 100.1 H170 M161.2 107.2 V114.4 H170 M161.2 107.2 H170 M156 89 H161"/>
<path d="M143.6 94.6 V110.6 H161.2"/>
</g>
<path d="M143.3 94.6 L155.5 84.5 V91.2 C163 91 169 95 168 102 C167.5 105 165 107.5 162.5 108.5 L162 102.5 C161 99.5 158.5 99 155.5 99.4 V105.7 Z" fill="#8e8e8e"/>
<!-- Rotate -->
<rect x="198.5" y="94.8" width="6" height="15" fill="#e4e1dc"/>
<g stroke="#8a8a8a" stroke-width="1.2" fill="none">
<path d="M197.7 94.2 V110.6 H215.4 M197.7 94.8 H204"/>
<path d="M215.4 85.2 V114.4 M215.4 85.2 H224 M215.4 92.8 H224 M215.4 100.1 H224 M215.4 107.2 H224 M215.4 114.4 H224"/>
</g>
<ellipse cx="212.4" cy="98.9" rx="6.9" ry="11.6" fill="none" stroke="#8e8e8e" stroke-width="3.6"/>
<path d="M199.6 94 L209 86.5 L211.5 97 Z M224.6 105 L216.2 100.8 L217.6 110 Z" fill="#8e8e8e"/>
<!-- Annotate paperclip -->
<g transform="translate(272.5,99.5) rotate(45)" fill="none" stroke-linecap="round">
<path d="M-2.4 9 V-9.5 A2.4 2.4 0 0 1 2.4 -9.5 V12 A4.3 4.3 0 0 1 -6 12 V-12 A6 6 0 0 1 6 -12 V8" stroke="#8c8c8c" stroke-width="2.2"/>
<path d="M-2.4 9 V-9.5 A2.4 2.4 0 0 1 2.4 -9.5 V12 A4.3 4.3 0 0 1 -6 12 V-12 A6 6 0 0 1 6 -12 V8" stroke="#c9c9c9" stroke-width="0.6"/>
</g>
<!-- Colour -->
<circle cx="334" cy="100.5" r="12.8" fill="url(#ball)"/>
<!-- Hilight -->
<rect x="379" y="84" width="24" height="19.5" fill="#999"/>
<g stroke="#828282" stroke-width="1.2" fill="none">
<path d="M384 94 V100 H402 M384 94 H392 M392.5 87.5 V92 H402 M392.5 87.5 H402"/>
</g>
<g stroke="#8a8a8a" stroke-width="1.2" fill="none">
<path d="M374.5 102 V110.5 H392.5 M374.5 94.5 H379 M374.5 94.5 V102 M392.5 107 V114 H401 M392.5 107 H401 M373 102 H375"/>
</g>
<!-- Find -->
<path d="M449 100.5 L456 110" stroke="#1d1d1d" stroke-width="3.4" stroke-linecap="round"/>
<circle cx="443.7" cy="94.2" r="7.6" fill="url(#lens)" stroke="#4a4a4a" stroke-width="1.4"/>
<!-- separators -->
<rect x="418.5" y="107" width="1" height="6" fill="#d8d2c6"/>
<rect x="474" y="107" width="1" height="6" fill="#d8d2c6"/>
</svg>
<div class="tbt" style="left:7px;top:121px;">Cartoon</div>
<div class="tbt" style="left:70px;top:121px;">Collapse</div>
<div class="tbt" style="left:135px;top:121px;">Reroot</div>
<div class="tbt" style="left:189px;top:121px;">Rotate</div>
<div class="tbt" style="left:243px;top:121px;">Annotate</div>
<div class="tbt" style="left:314px;top:121px;">Colour</div>
<div class="tbt" style="left:367px;top:121px;">Hilight</div>
<div class="tbt" style="left:434px;top:121px;color:#2e2e2e;text-shadow:none;">Find</div>
<!-- selection mode -->
<div class="btn" style="left:482px;top:89px;width:44px;height:27px;background:linear-gradient(#c2b6a5,#a99c87);box-shadow:inset 0 1px 2px rgba(0,0,0,.25);"></div>
<div class="btn" style="left:528px;top:89px;width:46px;height:27px;"></div>
<div class="btn" style="left:576px;top:89px;width:40px;height:27px;"></div>
<div class="t" style="left:487px;top:95px;font-size:14px;color:#333;">Node</div>
<div class="t" style="left:533px;top:95px;font-size:14px;color:#333;">Clade</div>
<div class="t" style="left:581px;top:95px;font-size:14px;color:#333;">Taxa</div>
<div class="t" style="left:501px;top:119px;font-size:14px;color:#333;">Selection Mode</div>
<!-- prev next -->
<div class="btn" style="left:943px;top:91px;width:24px;height:22px;background:linear-gradient(#f1ede6,#dcd3c5);border-color:#c4b8a4;"></div>
<div class="btn" style="left:969px;top:91px;width:24px;height:22px;background:linear-gradient(#d0c6b6,#a89b86);"></div>
<svg class="a" style="left:943px;top:91px" width="50" height="22" viewBox="0 0 50 22"><path d="M5 11 L11 5 V8.5 H16 V13.5 H11 V17 Z" fill="#888"/><path d="M41 11 L35 5 V8.5 H30 V13.5 H35 V17 Z" fill="#2a2a2a"/></svg>
<div class="t" style="left:932px;top:119px;font-size:14px;color:#333;">Prev/Next</div>
<rect></rect>
<div class="a" style="left:1150px;top:106px;width:1px;height:7px;background:#d9cfbf;box-shadow:1px 0 0 #faf8f4;"></div>
<div class="a" style="left:773px;top:106px;width:1px;height:7px;background:#d9cfbf;box-shadow:1px 0 0 #faf8f4;"></div>
<!-- filter -->
<div class="a" style="left:1314px;top:98px;width:120px;height:24px;border:1px solid #6f6f6f;background:#edeae4;"></div>
<svg class="a" style="left:1321px;top:102px" width="26" height="16" viewBox="0 0 26 16"><circle cx="6.5" cy="6.5" r="4.6" fill="#fff" stroke="#2b2b2b" stroke-width="1.8"/><path d="M9.8 9.8 L14 14" stroke="#2b2b2b" stroke-width="1.8"/><path d="M16 8 H21 L18.5 11 Z" fill="#333"/></svg>
<div class="a" style="left:1350px;top:100px;width:54px;height:20px;border:1px solid #a48e6a;border-radius:4px;background:#fff;"></div>
<div class="t" style="left:1350px;top:102px;font-size:14px;color:#b0b0b0;">Filter</div>
<svg class="a" style="left:1411px;top:103px" width="16" height="16" viewBox="0 0 16 16"><circle cx="8" cy="8" r="7" fill="#b3ada4"/><path d="M5 5 L11 11 M11 5 L5 11" stroke="#fff" stroke-width="1.8"/></svg>


<!-- EXPORT DIALOG -->
<div class="a" style="left:451px;top:345px;width:637px;height:172px;border-radius:6px 6px 5px 5px;box-shadow:0 2px 10px rgba(0,0,0,.45);background:#edeae4;overflow:hidden;border:1px solid #a39780;border-top:0;">
 <div class="a" style="left:-1px;top:0;width:636px;height:27px;background:linear-gradient(rgba(122,118,110,.92),rgba(74,72,67,.95) 55%,rgba(60,59,55,.97));"></div>
 <div class="a" style="left:464px;top:-1px;width:1px;height:1px;"></div>
</div>
<svg class="a" style="left:451px;top:345px" width="636" height="27" viewBox="0 0 636 27"><path d="M5 12.5 H96" stroke="#262522" stroke-width="3" opacity=".6"/><path d="M6.5 11 V27" stroke="#262522" stroke-width="3" opacity=".6"/></svg>
<div class="a" style="left:463px;top:351px;width:16px;height:16px;border-radius:50%;background:radial-gradient(circle at 50% 40%,#66635c,#4b4944);border:1px solid #706d66;"></div>
<svg class="a" style="left:463px;top:351px" width="16" height="16" viewBox="0 0 16 16"><path d="M5.5 5.5 L10.5 10.5 M10.5 5.5 L5.5 10.5" stroke="#b9b5ac" stroke-width="1"/></svg>
<div class="t" style="left:494px;top:352px;font-size:14px;font-weight:bold;color:#a09c92;letter-spacing:1.1px;">Export view as ...</div>
<div class="a" style="left:465px;top:385px;width:527px;height:25px;border:1px solid #b39f7c;border-radius:4px;background:#fff;"></div>
<div class="t" style="left:468px;top:390px;font-size:14.3px;color:#222;">/home/peng/export</div>
<div class="btn" style="left:1004px;top:384px;width:71px;height:27px;"></div>
<div class="t" style="left:1010px;top:390px;font-size:14px;color:#333;letter-spacing:.3px;">Browse...</div>
<div class="a" style="left:465px;top:424px;width:527px;height:25px;border:1px solid #b39f7c;border-radius:4px;background:#fff;overflow:hidden;">
 <div class="a" style="left:500px;top:0;width:25px;height:23px;border-left:1px solid #b8ab96;background:linear-gradient(#cdc2b1,#a99c87);"><div class="a" style="left:7px;top:8px;width:0;height:0;border-left:4.5px solid transparent;border-right:4.5px solid transparent;border-top:7px solid #6d675e;"></div></div>
</div>
<div class="btn" style="left:1004px;top:423px;width:71px;height:27px;background:linear-gradient(#ebe6de,#ddd6ca);border-color:#c9bfae;"></div>
<div class="t" style="left:1008px;top:429px;font-size:14px;color:#faf8f4;letter-spacing:.3px;text-shadow:0 0 1px #b5ab9b, 1px 1px 0 #c9c0b0;">Options...</div>
<div class="a" style="left:462px;top:461px;width:614px;height:1px;background:#e4ddd1;box-shadow:0 1px 0 #f7f5f1;"></div>
<div class="btn" style="left:922px;top:478px;width:73px;height:27px;"></div>
<svg class="a" style="left:926px;top:482px" width="18" height="18" viewBox="0 0 18 18"><defs><radialGradient id="rc" cx="50%" cy="25%" r="75%"><stop offset="0" stop-color="#f26a5a"/><stop offset=".6" stop-color="#d0202a"/><stop offset="1" stop-color="#8e1040"/></radialGradient></defs><circle cx="9" cy="9" r="8" fill="url(#rc)"/><path d="M5.8 5.8 L12.2 12.2 M12.2 5.8 L5.8 12.2" stroke="#fff" stroke-width="2.2"/></svg>
<div class="t" style="left:948px;top:484px;font-size:14px;color:#333;"><u>C</u>ancel</div>
<div class="btn" style="left:1007px;top:478px;width:73px;height:27px;"></div>
<svg class="a" style="left:1020px;top:482px" width="20" height="20" viewBox="0 0 20 20"><path d="M2 11 L5 9 L8 14 L16 2 L18 4 L8 18 Z" fill="#9acd32" stroke="#5f8f10" stroke-width=".8"/></svg>
<div class="t" style="left:1043px;top:484px;font-size:14px;color:#333;"><u>O</u>K</div>

<div class="a" style="left:753px;top:512px;width:157px;height:2px;background:rgba(0,0,0,.10);"></div>
<div class="a" style="left:912px;top:505px;width:60px;height:11px;overflow:hidden;"><div class="t" style="left:3px;top:1px;font-family:'Liberation Serif';font-size:12px;letter-spacing:.5px;color:rgba(0,0,0,.16);">sceGUP2</div></div>
<!-- ERROR DIALOG -->
<div class="a" style="left:637px;top:372px;width:264px;height:139px;border-radius:6px;box-shadow:2px 3px 10px rgba(0,0,0,.45);background:#edeae4;border:1px solid #9c8f78;overflow:hidden;">
 <div class="a" style="left:0;top:0;width:264px;height:26px;background:linear-gradient(#5e5b55,#46443f 45%,#3c3b37);"></div>
</div>
<svg class="a" style="left:648px;top:378px" width="18" height="18" viewBox="0 0 18 18"><defs><radialGradient id="oc" cx="50%" cy="35%" r="65%"><stop offset="0" stop-color="#f6936b"/><stop offset="1" stop-color="#e25a2a"/></radialGradient></defs><circle cx="9" cy="9" r="8.3" fill="#2b2a27"/><circle cx="9" cy="9" r="6.8" fill="url(#oc)"/><path d="M6.6 6.6 L11.4 11.4 M11.4 6.6 L6.6 11.4" stroke="#3a2a22" stroke-width="1.2"/></svg>
<div class="t" style="left:680px;top:379px;font-size:14px;font-weight:bold;color:#dfdbd2;letter-spacing:.4px;">Error...</div>
<svg class="a" style="left:645px;top:407px" width="46" height="48" viewBox="0 0 46 48"><defs><radialGradient id="er" cx="50%" cy="15%" r="90%"><stop offset="0" stop-color="#f07a6a"/><stop offset=".45" stop-color="#d42a2a"/><stop offset="1" stop-color="#8c0a40"/></radialGradient><radialGradient id="es" cx="50%" cy="50%" r="50%"><stop offset="0" stop-color="#000" stop-opacity=".18"/><stop offset="1" stop-color="#000" stop-opacity="0"/></radialGradient></defs><ellipse cx="23" cy="39" rx="21" ry="6" fill="url(#es)"/><circle cx="23" cy="23" r="20" fill="url(#er)" stroke="#b02030" stroke-width=".6"/><rect x="8" y="20" width="30" height="5.5" fill="#fff"/></svg>
<div class="t" style="left:707px;top:420px;font-size:14px;color:#333;letter-spacing:.1px;">Error writing graphics file</div>
<div class="a" style="left:645px;top:455px;width:248px;height:1px;background:#e6dfd3;box-shadow:0 1px 0 #f7f5f1;"></div>
<div class="btn" style="left:787px;top:472px;width:66px;height:27px;"></div>
<div class="t" style="left:792px;top:478px;font-size:14px;color:#333;letter-spacing:.2px;">Details...</div>
<div class="btn" style="left:865px;top:472px;width:28px;height:27px;"></div>
<div class="a" style="left:868px;top:475px;width:22px;height:21px;border:1px solid #ef8a74;border-radius:2px;background:linear-gradient(#d8bca8,#c5a690);"></div>
<div class="t" style="left:869px;top:478px;font-size:14px;color:#333;">OK</div>

<!-- TOOLTIP -->
<div class="a" style="left:199px;top:9px;width:364px;height:27px;border-radius:5px;background:rgba(6,6,6,0.93);"></div>
<div class="t" style="left:207px;top:15px;font-size:14.5px;color:#fff;">Change system appearance and behavior, or get help</div>


</body></html>
